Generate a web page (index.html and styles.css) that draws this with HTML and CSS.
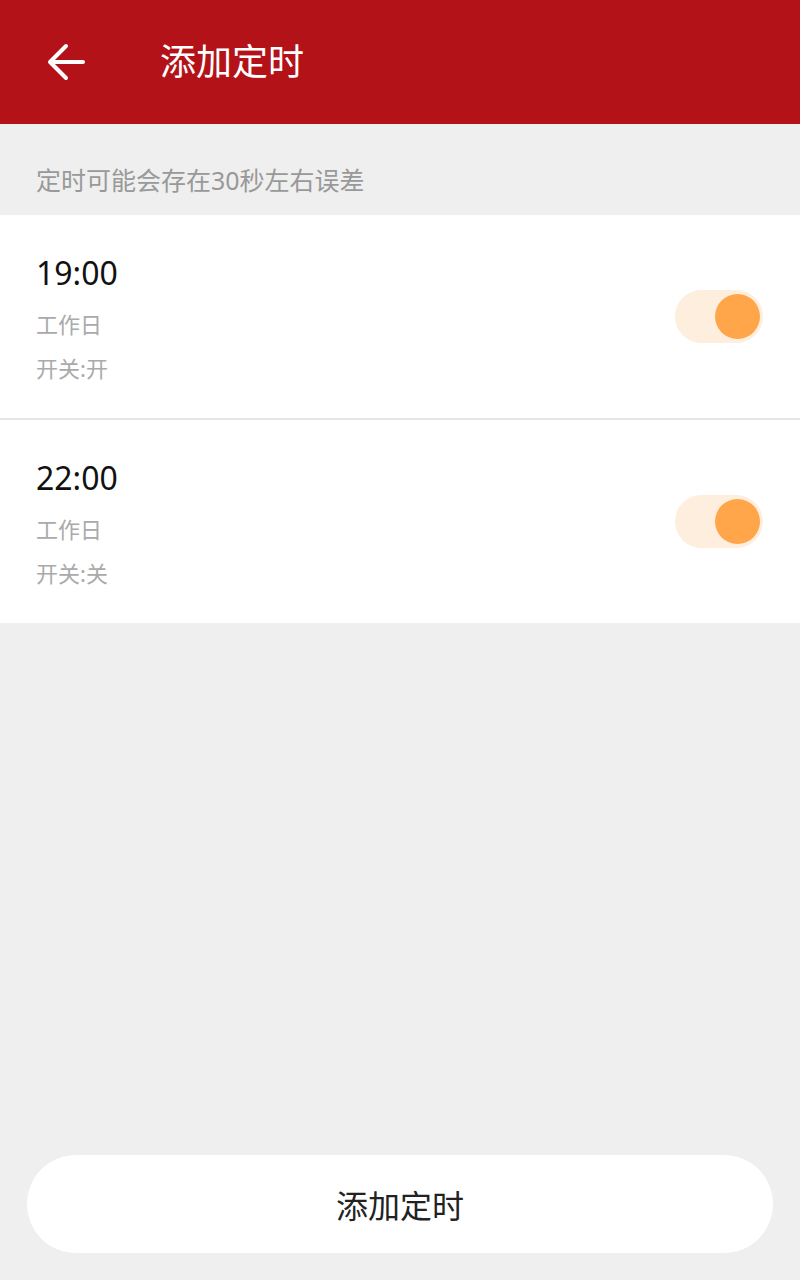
FILE: index.html
```html
<!DOCTYPE html>
<html>
<head>
<meta name="viewport" content="width=device-width, initial-scale=1">
<link rel="stylesheet" href="styles.css">
</head>
<body>

<div class="page">
  <div class="header">
    <svg class="back" width="38" height="38" viewBox="0 0 38 38">
      <path d="M3 19 H36 M19 3 L3 19 L19 35" fill="none" stroke="#fff" stroke-width="4" stroke-linecap="round" stroke-linejoin="round"/>
    </svg>
    <span class="title">添加定时</span>
  </div>

  <p class="notice">定时可能会存在30秒左右误差</p>

  <div class="list">
    <div class="row">
      <div class="info">
        <div class="time">19:00</div>
        <div class="sub">工作日</div>
        <div class="sub">开关:开</div>
      </div>
      <div class="toggle on"><span class="knob"></span></div>
    </div>
    <div class="row">
      <div class="info">
        <div class="time">22:00</div>
        <div class="sub">工作日</div>
        <div class="sub">开关:关</div>
      </div>
      <div class="toggle on"><span class="knob"></span></div>
    </div>
  </div>

  <button class="add-btn">添加定时</button>
</div>

</body>
</html>
```

FILE: styles.css
```css
* {
  box-sizing: border-box;
}

body {
  margin: 0;
  background-color: #efefef;
  font-family: "Noto Sans", "Noto Sans CJK SC", sans-serif;
}

.page {
  display: flex;
  flex-direction: column;
  min-height: 1280px;
}

/* Red title bar */
.header {
  height: 124px;
  background-color: #b31318;
  display: flex;
  align-items: center;
  padding-left: 47px;
}

.back {
  display: block;
  flex-shrink: 0;
}

.title {
  margin-left: 75px;
  color: #fff;
  font-size: 36px;
  line-height: 1;
  margin-top: -1px;
}

.notice {
  margin: 0;
  padding: 40px 36px 18px;
  font-size: 25px;
  line-height: 33px;
  color: #999;
}

/* Timer list */
.list {
  display: flex;
  flex-direction: column;
  gap: 2px;
  background-color: #e6e6e6;
}

.row {
  background-color: #fff;
  display: flex;
  align-items: center;
  justify-content: space-between;
  padding: 38px 37px 28px 36px;
}

.time {
  font-size: 32px;
  line-height: 40px;
  color: #111;
  margin-bottom: 9px;
}

.sub {
  font-size: 22px;
  line-height: 44px;
  color: #aaa;
}

.toggle {
  width: 88px;
  height: 53px;
  border-radius: 27px;
  background-color: #fdeedd;
  position: relative;
  margin-top: -10px;
}

.toggle .knob {
  position: absolute;
  top: 4px;
  right: 3px;
  width: 45px;
  height: 45px;
  border-radius: 50%;
  background-color: #ffa54a;
}

/* Bottom button */
.add-btn {
  margin: auto 27px 27px;
  height: 98px;
  border: none;
  border-radius: 49px;
  background-color: #fff;
  font-family: "Noto Sans", "Noto Sans CJK SC", sans-serif;
  font-size: 32px;
  color: #222;
}
```
